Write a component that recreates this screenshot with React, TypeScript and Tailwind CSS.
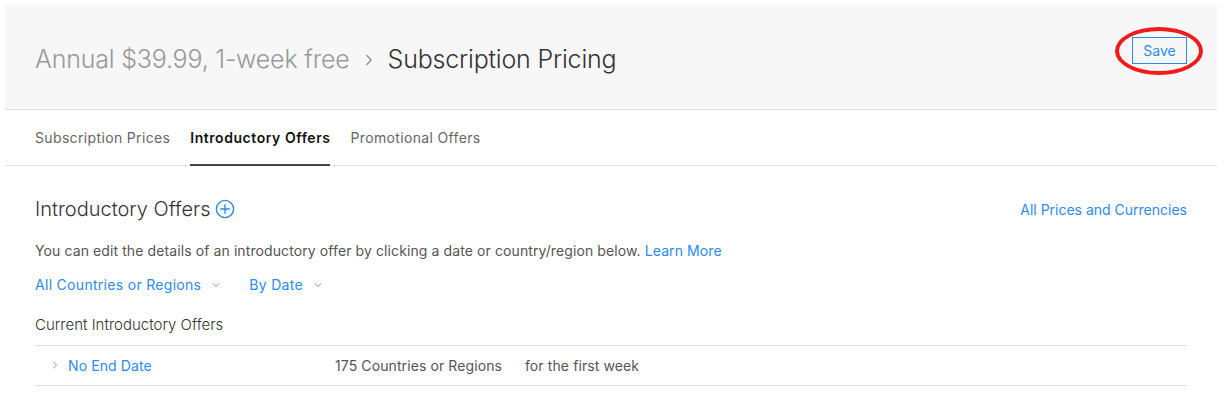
import { ChevronRight, ChevronDown } from 'lucide-react'

const BLUE = 'text-[#2b8bf2]'

function PlusCircle() {
  return (
    <svg width="20" height="20" viewBox="0 0 20 20" fill="none" className="text-[#2b8bf2]">
      <circle cx="10" cy="10" r="8.6" stroke="currentColor" strokeWidth="1.4" />
      <path d="M10 5.2v9.6M5.2 10h9.6" stroke="currentColor" strokeWidth="1.4" />
    </svg>
  )
}

export default function App() {
  return (
    <div
      className="w-[1230px] h-[406px] bg-white pt-[5px] pl-[5px] overflow-hidden"
      style={{ fontFamily: 'Inter, "Noto Sans", sans-serif' }}
    >
      <div className="w-[1212px]">
        <div className="h-[105px] bg-[#f7f7f7] border-b border-[#e1e1e1] flex items-center justify-between pl-[30px] pr-[30px]">
          <div className="flex items-center text-[25px] font-light tracking-[-0.2px] mt-[5px]">
            <span className="text-[#999999]">Annual $39.99, 1-week free</span>
            <ChevronRight size={18} strokeWidth={1.6} className="text-[#8a8a8a] mx-[10px]" />
            <span className="text-[#333333]">Subscription Pricing</span>
          </div>
          <div className="relative -mt-[14px]">
            <button className={`h-[27px] w-[55px] border border-[#2b8bf2] text-[14px] ${BLUE}`}>
              Save
            </button>
            <div className="absolute -left-[17px] -right-[16px] -top-[10px] -bottom-[11px] rounded-[50%] border-[4px] border-[#f21b1b]" />
          </div>
        </div>

        <div className="h-[56px] border-b border-[#e1e1e1] flex items-stretch gap-[20px] pl-[30px] text-[14px] tracking-[0.35px]">
          <div className="flex items-center text-[#666666]">Subscription Prices</div>
          <div className="flex items-center font-semibold text-[#111111] tracking-[0.55px] border-b-2 border-[#444444] -mb-px pt-px">
            Introductory Offers
          </div>
          <div className="flex items-center text-[#666666]">Promotional Offers</div>
        </div>

        <div className="px-[30px] pr-[30px]">
          <div className="flex items-center justify-between mt-[28px]">
            <div className="flex items-center gap-[4px]">
              <span className="text-[20px] font-light text-[#333333]">Introductory Offers</span>
              <PlusCircle />
            </div>
            <a className={`text-[14px] ${BLUE}`}>All Prices and Currencies</a>
          </div>

          <p className="mt-[16px] text-[14px] text-[#555555] tracking-[0.1px]">
            You can edit the details of an introductory offer by clicking a date or country/region below.{' '}
            <a className={BLUE}>Learn More</a>
          </p>

          <div className={`mt-[13px] flex items-center gap-[27px] text-[14px] tracking-[0.3px] ${BLUE}`}>
            <span className="flex items-center gap-[9px]">
              All Countries or Regions <ChevronDown size={12} strokeWidth={1.6} />
            </span>
            <span className="flex items-center gap-[9px]">
              By Date <ChevronDown size={12} strokeWidth={1.6} />
            </span>
          </div>

          <div className="mt-[19px] text-[15px] font-light text-[#333333] pb-[8px]">Current Introductory Offers</div>

          <div className="border-t border-b border-[#e1e1e1] h-[41px] flex items-center text-[14px] tracking-[0.1px]">
            <div className={`w-[300px] flex items-center gap-[7px] pl-[14px] ${BLUE}`}>
              <ChevronRight size={12} strokeWidth={1.6} />
              <span>No End Date</span>
            </div>
            <div className="w-[190px] text-[#555555]">175 Countries or Regions</div>
            <div className="text-[#555555]">for the first week</div>
          </div>
        </div>
      </div>
    </div>
  )
}
